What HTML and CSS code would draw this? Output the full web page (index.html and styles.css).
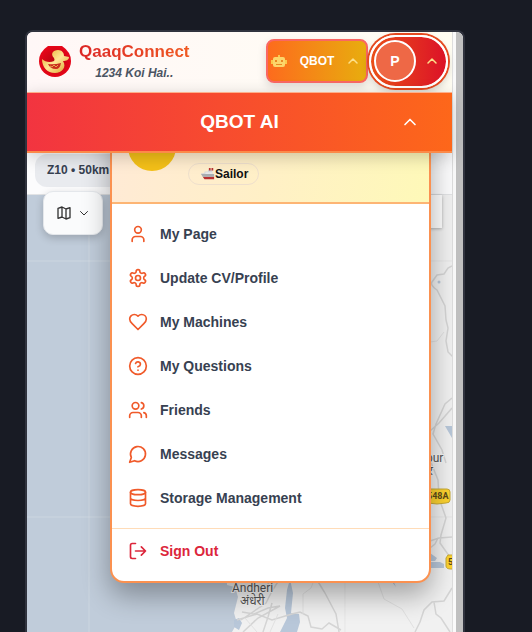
FILE: index.html
```html
<!DOCTYPE html>
<html lang="en">
<head>
<meta charset="utf-8">
<meta name="viewport" content="width=device-width, initial-scale=1">
<title>QaaqConnect</title>
<link rel="stylesheet" href="styles.css">
</head>
<body>
<div class="frame">
  <div class="screen">
    <header class="header">
      <svg class="logo" viewBox="0 0 32 32" aria-hidden="true">
        <defs>
          <linearGradient id="gold" x1="0" y1="0" x2="1" y2="1"><stop offset="0" stop-color="#e5a928"/><stop offset=".5" stop-color="#ffe594"/><stop offset="1" stop-color="#d99c25"/></linearGradient>
          <radialGradient id="red"><stop offset="0" stop-color="#b50510"/><stop offset="1" stop-color="#e60619"/></radialGradient>
        </defs>
        <path d="M9 1h14q9 6 9 15a16 16 0 0 1-32 0Q0 7 9 1z" fill="url(#red)"/>
        <path d="M15 13c-4-4-1-8 4-8 4 0 6 3 6 6l5 1c0 3-3 4-6 4 4 6-1 12-8 12C8 28 3 22 3 14c3 3 8 4 12 2q1-1 0-3z" fill="url(#gold)"/>
        <path d="M9 19q6 1 13-1-1 6-5 6-6 0-8-5z" fill="#c92c1c"/>
        <path d="M11 21l2 1 2-2 2 2 2-2" stroke="#e7a34b" fill="none"/>
      </svg>
      <div class="brand">
        <h1 class="brand-name">QaaqConnect</h1>
        <p class="tagline">1234 Koi Hai..</p>
      </div>
      <button class="qbot" type="button">
        <svg class="robot" viewBox="0 0 16 16" aria-hidden="true">
          <path d="M7 2h2v3H7zM0 7h2v4H0zM14 7h2v4h-2z" fill="#fbc94d"/>
          <rect x="2" y="4" width="12" height="10" rx="2" fill="#fcd66b"/>
          <path d="M4 7h2v2H4zM10 7h2v2h-2zM5 11h6v1H5z" fill="#e98a24"/>
        </svg>
        <span>QBOT</span>
        <svg class="icon tiny yellow" viewBox="0 0 24 24" aria-hidden="true"><path d="m4 16 8-8 8 8"/></svg>
      </button>
      <button class="profile" type="button" aria-expanded="true">
        <span class="initial">P</span>
        <svg class="icon tiny yellow" viewBox="0 0 24 24" aria-hidden="true"><path d="m4 16 8-8 8 8"/></svg>
      </button>
    </header>

    <button class="bot-bar" type="button">
      <span class="bot-title">QBOT AI</span>
      <svg class="icon chevron" viewBox="0 0 24 24" aria-hidden="true"><path d="m6 15 6-6 6 6"/></svg>
    </button>

    <main class="content">
      <div class="toolbar"><span class="zoom-label">Z10 • 50km</span></div>
      <div class="map">
        <svg class="map-art" viewBox="27 195 425 437" preserveAspectRatio="xMidYMin slice" aria-hidden="true">
          <path fill="#c0ccda" d="M27 195h425v437H27z"/>
          <path fill="#f1f1f1" d="M222 195h230v437H232l5-9-3-10 4-16-3-10-8-2z"/>
          <path d="M27 261h425M27 517h425M89 195v437M345 195v437" stroke="#fff" stroke-opacity=".2" fill="none"/>
          <path d="M345 195v437M430 261h22M430 517h22" stroke="#e5e5e5" fill="none"/>
          <path fill="#b8c7d9" d="M290 579l3 14-2 20 8 1 1 8-3 10h-17l7-14-2-10 2-18zM445 426h7v12zM430 553l7 5-2 3h-5zM430 562h10l4 2v4h-14zM234 620l5-2 3 5-3 7-5-3zM393 580l3 7-4-5z"/>
          <circle cx="439" cy="282" r="1.5" fill="#b8c7d9"/>
          <g fill="none" stroke="#d5d5d5" stroke-width="1.5">
            <path d="M452 266l-4 2-4 6-7 1-5 7q-2 3 5 8l8 16 1 14 2 8-2 13 2 11 5 5"/>
            <path d="M452 398l-7 6-9 20-3 10 9 16 4 13M452 408l-13 15-9 8M430 460l8 20 1 18 7 20-5 17-1 8 12 17M430 541l9-3 13-1M430 548l5-4 3-6M452 588l-8 13-12 1-8 8-4 12-5 10M434 602l2 12 5 4 9 14"/>
            <path d="M317 580l8 13 11 21 3 18M270 580l-4 8M279 580l-7 11-6 12-25 17M237 620l20-6 15 6 20-6 8-2 8 4 3 11 11 2 7-6 12 7M243 632l15-14 22-12-12 2-14 6-12-2M263 632l5-15 4-14"/>
          </g>
          <path d="M430 342l7-1 7-9M378 582l6 17 18 10 12 19M314 580l-3 8-8 6v20M245 618l12 14M278 614l-8 18" fill="none" stroke="#e1e1e1"/>
          <g font-family="Roboto, 'Noto Sans', sans-serif" font-size="12" fill="#555" stroke="#f5f5f5" stroke-width="2" paint-order="stroke">
            <text x="232" y="592">Andheri</text><text x="240" y="605">अंधेरी</text>
            <text x="426" y="462">pur</text><text x="428" y="475">र</text>
          </g>
          <path fill="#fdd32f" stroke="#c8aa34" d="M427 489h20q3 0 3 3v8q0 3-4 3l-9 1-9-1zM448 555h12v14h-9q-5 0-5-3v-8z"/>
          <g font-family="Roboto, sans-serif" font-size="9" font-weight="700" fill="#5c4b18"><text x="427" y="499">548A</text><text x="448" y="565">5</text></g>
        </svg>
        <div class="map-panel"></div>
        <button class="map-button" type="button" aria-label="Map type">
          <svg class="icon small" viewBox="0 0 24 24" aria-hidden="true"><path d="m3 5 6-2 6 3 6-2v15l-6 2-6-3-6 2zM9 3v15M15 6v15"/></svg>
          <svg class="icon tiny" viewBox="0 0 24 24" aria-hidden="true"><path d="m5 9 7 7 7-7"/></svg>
        </button>
      </div>

      <div class="menu">
        <div class="menu-head">
          <div class="avatar"><svg viewBox="0 0 48 48" aria-hidden="true"><path d="M19 27h3v3h-3z" fill="#dc1717"/></svg></div>
          <span class="role"><svg class="ship" viewBox="0 0 16 14" aria-hidden="true"><path fill="#d4d7da" d="M4 6V4h4V2h5v5h2l-1 3H2L0 6z"/><path fill="#b93131" d="M9 0h2v3H9zM12 0h2v3h-2zM2 10h13v3H4z"/><path fill="#a9adb0" d="M0 7h15v3H2z"/><path fill="#e8e8e8" d="M5 5h8v2H5z"/></svg>Sailor</span>
        </div>
        <nav class="links">
          <a href="#page"><svg class="icon" viewBox="0 0 24 24" aria-hidden="true"><path d="M19 21v-2a4 4 0 0 0-4-4H9a4 4 0 0 0-4 4v2"/><circle cx="12" cy="7" r="4"/></svg>My Page</a>
          <a href="#profile"><svg class="icon" viewBox="0 0 24 24" aria-hidden="true"><path d="M12.22 2h-.44a2 2 0 0 0-2 2v.18a2 2 0 0 1-1 1.73l-.43.25a2 2 0 0 1-2 0l-.15-.08a2 2 0 0 0-2.73.73l-.22.38a2 2 0 0 0 .73 2.73l.15.1a2 2 0 0 1 1 1.72v.51a2 2 0 0 1-1 1.74l-.15.09a2 2 0 0 0-.73 2.73l.22.38a2 2 0 0 0 2.73.73l.15-.08a2 2 0 0 1 2 0l.43.25a2 2 0 0 1 1 1.73V20a2 2 0 0 0 2 2h.44a2 2 0 0 0 2-2v-.18a2 2 0 0 1 1-1.73l.43-.25a2 2 0 0 1 2 0l.15.08a2 2 0 0 0 2.73-.73l.22-.39a2 2 0 0 0-.73-2.73l-.15-.08a2 2 0 0 1-1-1.74v-.5a2 2 0 0 1 1-1.74l.15-.09a2 2 0 0 0 .73-2.73l-.22-.38a2 2 0 0 0-2.73-.73l-.15.08a2 2 0 0 1-2 0l-.43-.25a2 2 0 0 1-1-1.73V4a2 2 0 0 0-2-2z"/><circle cx="12" cy="12" r="3"/></svg>Update CV/Profile</a>
          <a href="#machines"><svg class="icon" viewBox="0 0 24 24" aria-hidden="true"><path d="M19 14c1.49-1.46 3-3.21 3-5.5A5.5 5.5 0 0 0 16.5 3c-1.76 0-3 .5-4.5 2-1.5-1.5-2.74-2-4.5-2A5.5 5.5 0 0 0 2 8.5c0 2.3 1.5 4.05 3 5.5l7 7Z"/></svg>My Machines</a>
          <a href="#questions"><svg class="icon" viewBox="0 0 24 24" aria-hidden="true"><circle cx="12" cy="12" r="10"/><path d="M9.09 9a3 3 0 0 1 5.83 1c0 2-3 3-3 3M12 17h.01"/></svg>My Questions</a>
          <a href="#friends"><svg class="icon" viewBox="0 0 24 24" aria-hidden="true"><path d="M16 21v-2a4 4 0 0 0-4-4H6a4 4 0 0 0-4 4v2M22 21v-2a4 4 0 0 0-3-3.87M16 3.13a4 4 0 0 1 0 7.75"/><circle cx="9" cy="7" r="4"/></svg>Friends</a>
          <a href="#messages"><svg class="icon" viewBox="0 0 24 24" aria-hidden="true"><path d="M7.9 20A9 9 0 1 0 4 16.1L2 22Z"/></svg>Messages</a>
          <a href="#storage"><svg class="icon" viewBox="0 0 24 24" aria-hidden="true"><ellipse cx="12" cy="5" rx="9" ry="3"/><path d="M3 5v14a9 3 0 0 0 18 0V5M3 12a9 3 0 0 0 18 0"/></svg>Storage Management</a>
        </nav>
        <div class="links sign-out">
          <a href="#signout"><svg class="icon" viewBox="0 0 24 24" aria-hidden="true"><path d="M9 21H5a2 2 0 0 1-2-2V5a2 2 0 0 1 2-2h4M16 17l5-5-5-5M21 12H9"/></svg>Sign Out</a>
        </div>
      </div>
    </main>
  </div>
  <div class="gutter"></div>
  <div class="scrollbar"></div>
</div>
</body>
</html>
```

FILE: styles.css
```css
* { box-sizing: border-box; }

body {
  margin: 0;
  min-height: 100vh;
  display: flex;
  padding: 30px 67px 0 25px;
  background: #181b24;
  font-family: "Liberation Sans", Arial, sans-serif;
  color: #374151;
}

button { font: inherit; border: 0; padding: 0; color: inherit; }

.frame {
  flex: 1;
  display: flex;
  min-width: 0;
  border: 2px solid #30333e;
  border-bottom: 0;
  border-radius: 8px 8px 0 0;
  background: #fafafa;
  overflow: hidden;
}

.screen { flex: 1; min-width: 0; display: flex; flex-direction: column; }
.gutter { width: 4px; border-left: 1px solid #dedede; }
.scrollbar { width: 7px; background: #c0c0c0; border-radius: 0 6px 0 0; }

.icon {
  width: 20px;
  height: 20px;
  flex: none;
  fill: none;
  stroke: currentColor;
  stroke-width: 2;
  stroke-linecap: round;
  stroke-linejoin: round;
}
.small { width: 16px; height: 16px; }
.tiny { width: 12px; height: 12px; stroke-width: 3; }
.yellow { color: #fde08a; }

.header {
  height: 60px;
  display: flex;
  align-items: center;
  padding: 0 2px 2px 12px;
  background: linear-gradient(90deg, #fff7f7, #fffbf5 60%, #fffdf2);
}
.logo { width: 32px; height: 32px; flex: none; }
.brand { margin-left: 8px; text-align: center; }
.brand-name {
  margin: 0;
  font-size: 17px;
  line-height: 22px;
  background: linear-gradient(90deg, #dc2626, #f05a22);
  background-clip: text;
  color: transparent;
}
.tagline { margin: 2px 0 0; font: italic 700 12px/16px "Liberation Sans", Arial, sans-serif; color: #4b5563; }

.qbot {
  width: 102px;
  height: 44px;
  margin-left: auto;
  display: flex;
  align-items: center;
  justify-content: space-between;
  padding: 0 7px 0 3px;
  border: 2px solid #f96763;
  border-radius: 8px;
  background: linear-gradient(90deg, #fd6b1d, #e8ad0e);
  box-shadow: 0 4px 10px #0002;
  color: #fff;
  font-size: 12px;
  font-weight: 700;
}
.robot { width: 16px; height: 16px; }

.profile {
  width: 79px;
  height: 53px;
  margin: 0 2px 0 1px;
  display: flex;
  align-items: center;
  justify-content: space-between;
  padding: 0 8px 0 3px;
  border: 2px solid #fff;
  border-radius: 27px;
  background: linear-gradient(90deg, #ea4f18, #dc1228) padding-box;
  box-shadow: 0 0 0 2px #e54a20, 0 4px 8px #0003;
}
.initial {
  width: 42px;
  height: 42px;
  display: grid;
  place-items: center;
  border: 2px solid #fff;
  border-radius: 50%;
  background: #ee6846;
  color: #fff;
  font-size: 14px;
  font-weight: 700;
}

.bot-bar {
  position: relative;
  z-index: 2;
  height: 61px;
  display: grid;
  grid-template-columns: 1fr auto 1fr;
  align-items: center;
  padding: 0 32px;
  border-top: 1px solid #fdb08c;
  border-bottom: 2px solid #fb8a49;
  background: linear-gradient(90deg, #f23440, #fd671a);
  box-shadow: 0 4px 16px #0003;
  color: #fff;
}
.bot-title { grid-column: 2; font-size: 19px; font-weight: 700; }
.chevron { justify-self: end; }

.content {
  position: relative;
  flex: 1;
  min-height: 0;
  display: flex;
  flex-direction: column;
}
.toolbar {
  height: 42px;
  padding: 1px 8px 0;
  border-bottom: 1px solid #e2e3e5;
  background: #fcfcfd;
}
.zoom-label {
  display: inline-block;
  padding: 0 12px;
  border-radius: 12px;
  background: #e9ebef;
  font-size: 12px;
  font-weight: 700;
  line-height: 33px;
}

.map { position: relative; flex: 1; min-height: 437px; }
.map-art { position: absolute; inset: 0; width: 100%; height: 100%; }
.map-panel {
  position: absolute;
  top: 0;
  right: 10px;
  width: 40px;
  height: 33px;
  background: #fff;
  box-shadow: 0 1px 3px #0004;
}
.map-button {
  position: absolute;
  top: -4px;
  left: 16px;
  width: 60px;
  height: 44px;
  display: flex;
  align-items: center;
  justify-content: center;
  gap: 6px;
  border: 1px solid #e4e7eb;
  border-radius: 10px;
  background: #fafbfc;
  box-shadow: 0 3px 8px #0003;
  color: #333;
}
.map-button .tiny { stroke-width: 2; }

.menu {
  position: absolute;
  top: -32px;
  right: 21px;
  width: 321px;
  border: 2px solid #fb9150;
  border-radius: 14px;
  background: #fff;
  box-shadow: 0 12px 28px #0005;
  overflow: hidden;
}
.menu-head {
  height: 81px;
  display: flex;
  align-items: flex-start;
  gap: 12px;
  padding: 0 16px;
  border-bottom: 2px solid #fdb574;
  background: linear-gradient(100deg, #ffead6, #fff0c6 50%, #fef9b8);
}
.avatar { width: 48px; height: 48px; border-radius: 50%; background: #f4c018; }
.role {
  display: flex;
  align-items: center;
  height: 22px;
  margin-top: 40px;
  padding: 0 10px 0 12px;
  border: 1px solid #eedfcc;
  border-radius: 11px;
  color: #111;
  font-size: 12px;
  font-weight: 700;
}
.ship { width: 14px; height: 14px; }

.links { padding: 8px 0; }
.links a {
  height: 44px;
  display: flex;
  align-items: center;
  gap: 12px;
  padding: 0 16px;
  color: #374151;
  font-size: 14px;
  font-weight: 700;
  text-decoration: none;
}
.links .icon { color: #f05a2a; }
.sign-out { padding: 0 0 8px; border-top: 1px solid #ffdcb8; }
.sign-out a, .sign-out .icon { color: #dc263b; }
```
